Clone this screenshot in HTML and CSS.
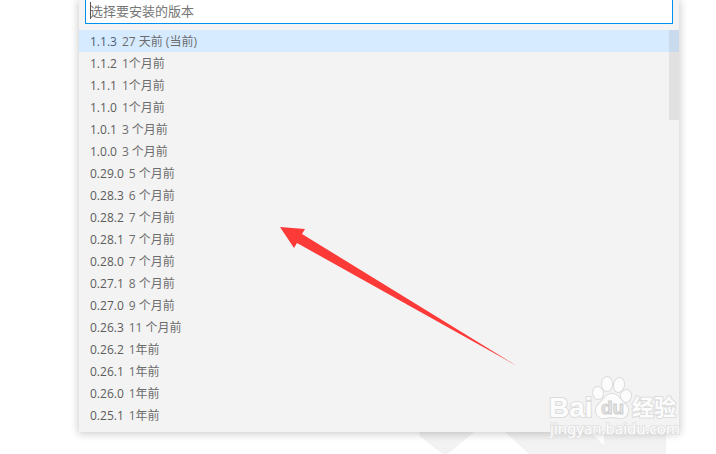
FILE: index.html
```html
<!DOCTYPE html>
<html lang="zh-CN">
<head>
<meta charset="utf-8">
<title>选择要安装的版本</title>
<link rel="stylesheet" href="styles.css">
</head>
<body>
<svg class="backdrop" width="247" height="22" viewBox="0 0 247 22" aria-hidden="true">
  <path d="M0 0H55L31 20Q26 24 21 20L2 5Q0 3 0 0Z"/>
  <path d="M86 0H171L185 13V0H247V22H110Z"/>
</svg>
<main class="picker">
  <div class="search">
    <input class="search-input" type="text" aria-label="选择要安装的版本" placeholder="选择要安装的版本">
    <span class="caret"></span>
  </div>
  <div class="results">
    <ul class="versions">
      <li><button class="row current"><span class="version">1.1.3</span><span class="age">27 天前 (当前)</span></button></li>
      <li><button class="row"><span class="version">1.1.2</span><span class="age">1个月前</span></button></li>
      <li><button class="row"><span class="version">1.1.1</span><span class="age">1个月前</span></button></li>
      <li><button class="row"><span class="version">1.1.0</span><span class="age">1个月前</span></button></li>
      <li><button class="row"><span class="version">1.0.1</span><span class="age">3 个月前</span></button></li>
      <li><button class="row"><span class="version">1.0.0</span><span class="age">3 个月前</span></button></li>
      <li><button class="row"><span class="version">0.29.0</span><span class="age">5 个月前</span></button></li>
      <li><button class="row"><span class="version">0.28.3</span><span class="age">6 个月前</span></button></li>
      <li><button class="row"><span class="version">0.28.2</span><span class="age">7 个月前</span></button></li>
      <li><button class="row"><span class="version">0.28.1</span><span class="age">7 个月前</span></button></li>
      <li><button class="row"><span class="version">0.28.0</span><span class="age">7 个月前</span></button></li>
      <li><button class="row"><span class="version">0.27.1</span><span class="age">8 个月前</span></button></li>
      <li><button class="row"><span class="version">0.27.0</span><span class="age">9 个月前</span></button></li>
      <li><button class="row"><span class="version">0.26.3</span><span class="age">11 个月前</span></button></li>
      <li><button class="row"><span class="version">0.26.2</span><span class="age">1年前</span></button></li>
      <li><button class="row"><span class="version">0.26.1</span><span class="age">1年前</span></button></li>
      <li><button class="row"><span class="version">0.26.0</span><span class="age">1年前</span></button></li>
      <li><button class="row"><span class="version">0.25.1</span><span class="age">1年前</span></button></li>
    </ul>
    <span class="thumb"></span>
  </div>
  <svg class="arrow" width="238" height="140" viewBox="0 0 238 140" aria-hidden="true">
    <path d="M1 0L26 2L23 7L238 139L18 16L15 21Z"/>
  </svg>
  <svg class="watermark" width="136" height="68" viewBox="0 0 136 68" role="img" aria-label="Baidu 经验">
    <g class="mark">
      <text class="brand" x="2" y="43">Bai</text>
      <ellipse cx="51" cy="19" rx="5" ry="6" transform="rotate(-12 51 19)"/>
      <ellipse cx="60" cy="10" rx="5" ry="7"/>
      <ellipse cx="72" cy="11" rx="5" ry="7" transform="rotate(10 72 11)"/>
      <ellipse cx="79" cy="22" rx="5" ry="6" transform="rotate(14 79 22)"/>
      <path d="M65 20C71 20 73 25 77 29C82 33 82 38 79 42C75 46 70 43 65 43C60 43 55 46 51 42C48 38 48 33 53 29C57 25 59 20 65 20Z"/>
      <text class="cjk" x="85" y="41">经验</text>
      <text class="site" x="3" y="60">jingyan.baidu.com</text>
    </g>
    <text class="du" x="54" y="40">du</text>
  </svg>
</main>
</body>
</html>
```
FILE: styles.css
```css
* {
  box-sizing: border-box;
}

body {
  position: relative;
  margin: 0;
  padding: 0 37px 22px 79px;
  background: #fff;
  font-family: "Open Sans", "Noto Sans CJK SC", sans-serif;
  font-size: 12px;
  overflow: hidden;
}

.backdrop {
  position: absolute;
  right: 50px;
  bottom: 0;
  fill: #f2f2f2;
}

.picker {
  position: relative;
  background: #f3f3f3;
  box-shadow: 0 1px 8px 1px rgba(0, 0, 0, 0.2);
}

.search {
  position: relative;
  padding: 0 6px 6px;
}

.search-input {
  display: block;
  width: 100%;
  height: 24px;
  padding: 0 4px 2px;
  border: 1px solid #0090f1;
  border-top: 0;
  background: #fff;
  font: 13px "Open Sans", "Noto Sans CJK SC", sans-serif;
}

.search-input::placeholder {
  color: #767676;
}

.caret {
  position: absolute;
  left: 11px;
  top: 2px;
  width: 1px;
  height: 17px;
  background: #555;
}

.results {
  position: relative;
  padding-bottom: 6px;
}

.versions {
  margin: 0;
  padding: 0;
  list-style: none;
}

.row {
  display: flex;
  align-items: center;
  gap: 5px;
  width: 100%;
  height: 22px;
  padding: 2px 11px 0;
  border: 0;
  background: none;
  font: inherit;
  line-height: 20px;
  text-align: left;
}

.current {
  background: #d6ebff;
}

.version {
  color: #5c5c5c;
}

.current .version {
  color: #4d6075;
}

.age {
  color: #6c6c6c;
}

.thumb {
  position: absolute;
  top: 0;
  right: 0;
  width: 10px;
  height: 90px;
  background: rgba(100, 100, 100, 0.12);
}

.arrow {
  position: absolute;
  left: 200px;
  top: 227px;
  fill: #fc3a38;
}

.watermark {
  position: absolute;
  right: -4px;
  top: 374px;
}

.mark {
  fill: #fcfcfc;
  stroke: #dcdcdc;
  stroke-width: 2px;
  paint-order: stroke;
}

.brand {
  font: bold 28px "Liberation Sans", sans-serif;
}

.cjk {
  font: bold 22px "Noto Sans CJK SC", sans-serif;
}

.site {
  stroke: #e2e2e2;
  font: 15px "Noto Sans", sans-serif;
}

.du {
  fill: #e6e6e6;
  stroke: #cfcfcf;
  stroke-width: 1px;
  font: bold 19px "Liberation Sans", sans-serif;
}
```
